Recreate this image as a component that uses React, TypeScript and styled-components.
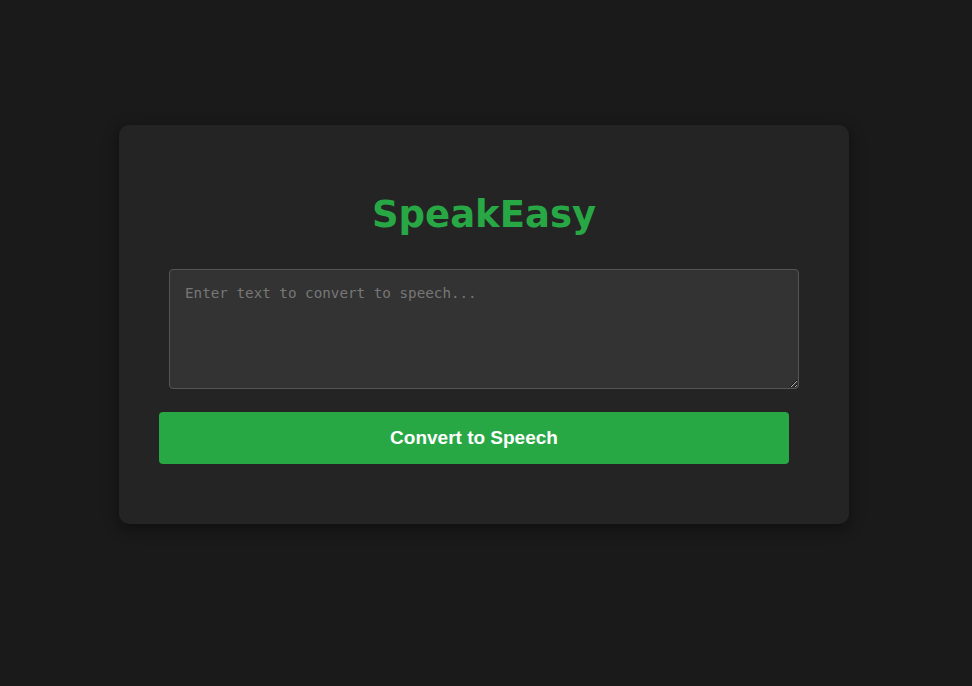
import React from "react";
import styled, { createGlobalStyle } from "styled-components";

const Global = createGlobalStyle`
  html, body { margin: 0; padding: 0; background: #1a1a1a; }
  body { font-family: "Liberation Sans", Arial, sans-serif; }
`;

const Page = styled.div`
  min-height: 686px;
  box-sizing: border-box;
  padding: 125px 0 0 119px;
`;

const Card = styled.div`
  width: 730px;
  height: 399px;
  box-sizing: border-box;
  background: #242424;
  border-radius: 10px;
  box-shadow: 0 4px 16px rgba(0, 0, 0, 0.45);
  padding: 64px 40px 0 40px;
  display: flex;
  flex-direction: column;
  align-items: flex-start;
`;

const Title = styled.h1`
  margin: 0 0 28px 0;
  width: 100%;
  text-align: center;
  font-family: "DejaVu Sans", Verdana, sans-serif;
  font-weight: bold;
  font-size: 37px;
  line-height: 52px;
  color: #28a745;
`;

const TextArea = styled.textarea`
  display: block;
  width: 630px;
  height: 120px;
  box-sizing: border-box;
  margin: 0 0 23px 10px;
  padding: 15px;
  background: #333333;
  border: 1px solid #555555;
  border-radius: 4px;
  color: #dddddd;
  font-family: "DejaVu Sans Mono", monospace;
  font-size: 14.25px;
  resize: vertical;
  outline: none;
  &::placeholder { color: #777777; }
`;

const Button = styled.button`
  width: 630px;
  height: 52px;
  border: none;
  border-radius: 4px;
  background: #28a745;
  color: #ffffff;
  font-family: "Liberation Sans", Arial, sans-serif;
  font-weight: bold;
  font-size: 19px;
  cursor: pointer;
`;

export default function App() {
  return (
    <>
      <Global />
      <Page>
        <Card>
          <Title>SpeakEasy</Title>
          <TextArea placeholder="Enter text to convert to speech..." />
          <Button>Convert to Speech</Button>
        </Card>
      </Page>
    </>
  );
}
